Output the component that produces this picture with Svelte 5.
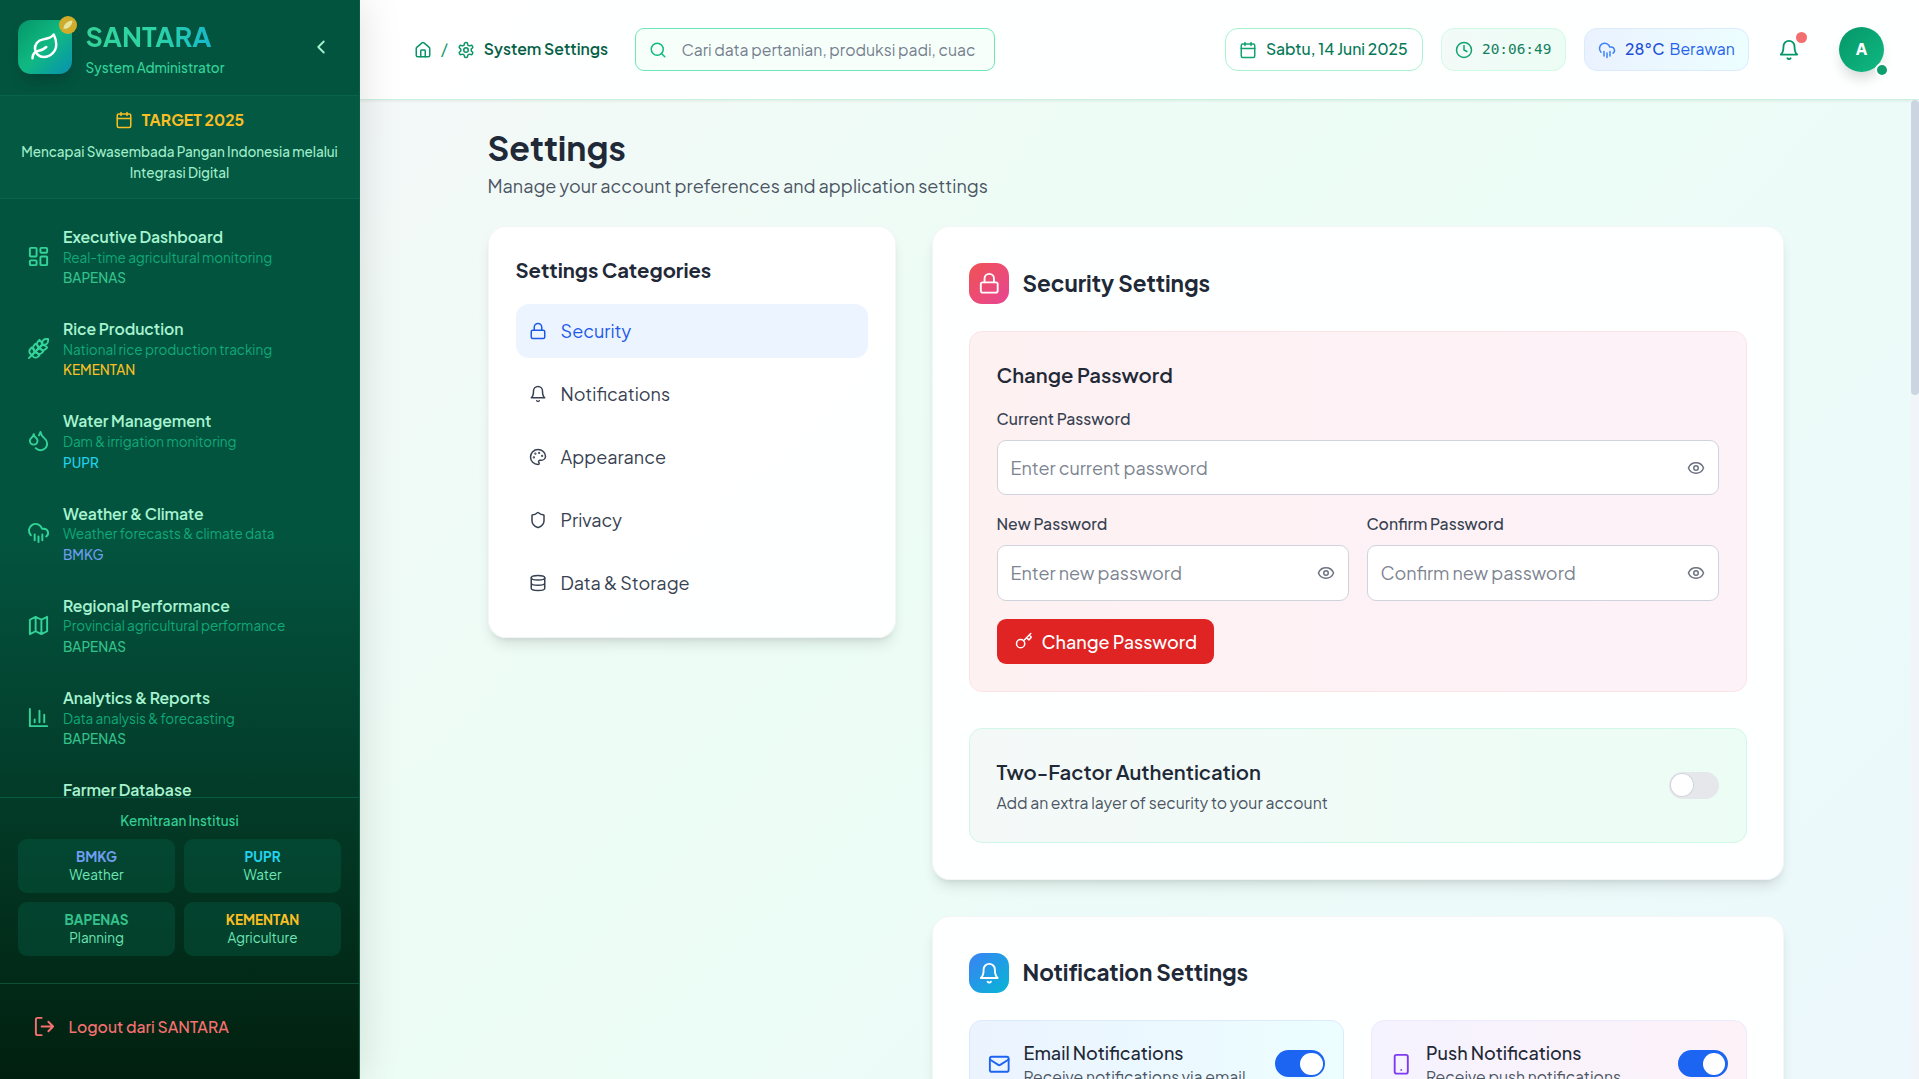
<script>
  const icons = {
    leaf: '<path d="M11 20A7 7 0 0 1 9.8 6.1C15.5 5 17 4.48 19 2c1 2 2 4.18 2 8 0 5.5-4.78 10-10 10Z"/><path d="M2 21c0-3 1.85-5.36 5.08-6C9.5 14.52 12 13 13 12"/>',
    chevron: '<path d="m15 18-6-6 6-6"/>',
    calendar: '<path d="M8 2v4M16 2v4M3 10h18"/><rect width="18" height="18" x="3" y="4" rx="2"/>',
    dashboard: '<rect width="7" height="9" x="3" y="3" rx="1"/><rect width="7" height="5" x="14" y="3" rx="1"/><rect width="7" height="9" x="14" y="12" rx="1"/><rect width="7" height="5" x="3" y="16" rx="1"/>',
    wheat: '<path d="M2 22 16 8"/><path d="M3.47 12.53 5 11l1.53 1.53a3.5 3.5 0 0 1 0 4.94L5 19l-1.53-1.53a3.5 3.5 0 0 1 0-4.94Z"/><path d="M7.47 8.53 9 7l1.53 1.53a3.5 3.5 0 0 1 0 4.94L9 15l-1.53-1.53a3.5 3.5 0 0 1 0-4.94Z"/><path d="M11.47 4.53 13 3l1.53 1.53a3.5 3.5 0 0 1 0 4.94L13 11l-1.53-1.53a3.5 3.5 0 0 1 0-4.94Z"/><path d="M20 2h2v2a4 4 0 0 1-4 4h-2V6a4 4 0 0 1 4-4Z"/><path d="M11.47 17.47 13 19l-1.53 1.53a3.5 3.5 0 0 1-4.94 0L5 19l1.53-1.53a3.5 3.5 0 0 1 4.94 0Z"/><path d="M15.47 13.47 17 15l-1.53 1.53a3.5 3.5 0 0 1-4.94 0L9 15l1.53-1.53a3.5 3.5 0 0 1 4.94 0Z"/><path d="M19.47 9.47 21 11l-1.53 1.53a3.5 3.5 0 0 1-4.94 0L13 11l1.53-1.53a3.5 3.5 0 0 1 4.94 0Z"/>',
    droplets: '<path d="M7 16.3c2.2 0 4-1.83 4-4.05 0-1.16-.57-2.26-1.71-3.19S7.29 6.75 7 5.3c-.29 1.45-1.14 2.84-2.29 3.76S3 11.1 3 12.25c0 2.22 1.8 4.05 4 4.05z"/><path d="M12.56 6.6A10.97 10.97 0 0 0 14 3.02c.5 2.5 2 4.9 4 6.5s3 3.5 3 5.5a6.98 6.98 0 0 1-11.91 4.97"/>',
    rain: '<path d="M4 14.899A7 7 0 1 1 15.71 8h1.79a4.5 4.5 0 0 1 2.5 8.242"/><path d="M16 14v6M8 14v6M12 16v6"/>',
    map: '<path d="m3 6 6-3 6 3 6-3v15l-6 3-6-3-6 3zM9 3v15M15 6v15"/>',
    chart: '<path d="M3 3v18h18M18 17V9M13 17V5M8 17v-3"/>',
    users: '<path d="M16 21v-2a4 4 0 0 0-4-4H6a4 4 0 0 0-4 4v2"/><circle cx="9" cy="7" r="4"/>',
    logout: '<path d="M9 21H5a2 2 0 0 1-2-2V5a2 2 0 0 1 2-2h4M16 17l5-5-5-5M21 12H9"/>',
    home: '<path d="M15 21v-8a1 1 0 0 0-1-1h-4a1 1 0 0 0-1 1v8"/><path d="M3 10a2 2 0 0 1 .709-1.528l7-5.999a2 2 0 0 1 2.582 0l7 5.999A2 2 0 0 1 21 10v9a2 2 0 0 1-2 2H5a2 2 0 0 1-2-2z"/>',
    settings: '<path d="M12.22 2h-.44a2 2 0 0 0-2 2v.18a2 2 0 0 1-1 1.73l-.43.25a2 2 0 0 1-2 0l-.15-.08a2 2 0 0 0-2.73.73l-.22.38a2 2 0 0 0 .73 2.73l.15.1a2 2 0 0 1 1 1.72v.51a2 2 0 0 1-1 1.74l-.15.09a2 2 0 0 0-.73 2.73l.22.38a2 2 0 0 0 2.73.73l.15-.08a2 2 0 0 1 2 0l.43.25a2 2 0 0 1 1 1.73V20a2 2 0 0 0 2 2h.44a2 2 0 0 0 2-2v-.18a2 2 0 0 1 1-1.73l.43-.25a2 2 0 0 1 2 0l.15.08a2 2 0 0 0 2.73-.73l.22-.39a2 2 0 0 0-.73-2.73l-.15-.08a2 2 0 0 1-1-1.74v-.5a2 2 0 0 1 1-1.74l.15-.09a2 2 0 0 0 .73-2.73l-.22-.38a2 2 0 0 0-2.73-.73l-.15.08a2 2 0 0 1-2 0l-.43-.25a2 2 0 0 1-1-1.73V4a2 2 0 0 0-2-2z"/><circle cx="12" cy="12" r="3"/>',
    search: '<circle cx="11" cy="11" r="8"/><path d="m21 21-4.3-4.3"/>',
    clock: '<circle cx="12" cy="12" r="10"/><path d="M12 6v6l4 2"/>',
    bell: '<path d="M6 8a6 6 0 0 1 12 0c0 7 3 9 3 9H3s3-2 3-9M10.3 21a1.94 1.94 0 0 0 3.4 0"/>',
    lock: '<rect width="18" height="11" x="3" y="11" rx="2"/><path d="M7 11V7a5 5 0 0 1 10 0v4"/>',
    palette: '<g fill="currentColor"><circle cx="13.5" cy="6.5" r=".5"/><circle cx="17.5" cy="10.5" r=".5"/><circle cx="8.5" cy="7.5" r=".5"/><circle cx="6.5" cy="12.5" r=".5"/></g><path d="M12 2C6.5 2 2 6.5 2 12s4.5 10 10 10c.926 0 1.648-.746 1.648-1.688 0-.437-.18-.835-.437-1.125-.29-.289-.438-.652-.438-1.125a1.64 1.64 0 0 1 1.668-1.668h1.996c3.051 0 5.555-2.503 5.555-5.554C21.965 6.012 17.461 2 12 2z"/>',
    shield: '<path d="M20 13c0 5-3.5 7.5-7.66 8.95a1 1 0 0 1-.67-.01C7.5 20.5 4 18 4 13V6a1 1 0 0 1 1-1c2 0 4.5-1.2 6.24-2.72a1.17 1.17 0 0 1 1.52 0C14.51 3.81 17 5 19 5a1 1 0 0 1 1 1z"/>',
    database: '<ellipse cx="12" cy="5" rx="9" ry="3"/><path d="M3 5v14a9 3 0 0 0 18 0V5M3 12a9 3 0 0 0 18 0"/>',
    eye: '<path d="M2.062 12.348a1 1 0 0 1 0-.696 10.75 10.75 0 0 1 19.876 0 1 1 0 0 1 0 .696 10.75 10.75 0 0 1-19.876 0"/><circle cx="12" cy="12" r="3"/>',
    key: '<path d="m15.5 7.5 2.3 2.3a1 1 0 0 0 1.4 0l2.1-2.1a1 1 0 0 0 0-1.4L19 4M21 2l-9.6 9.6"/><circle cx="7.5" cy="15.5" r="5.5"/>',
    mail: '<rect width="20" height="16" x="2" y="4" rx="2"/><path d="m22 7-8.97 5.7a1.94 1.94 0 0 1-2.06 0L2 7"/>',
    phone: '<rect width="14" height="20" x="5" y="2" rx="2"/><path d="M12 18h.01"/>'
  };

  const nav = [
    { icon: 'dashboard', title: 'Executive Dashboard', desc: 'Real-time agricultural monitoring', org: 'BAPENAS' },
    { icon: 'wheat', title: 'Rice Production', desc: 'National rice production tracking', org: 'KEMENTAN' },
    { icon: 'droplets', title: 'Water Management', desc: 'Dam & irrigation monitoring', org: 'PUPR' },
    { icon: 'rain', title: 'Weather & Climate', desc: 'Weather forecasts & climate data', org: 'BMKG' },
    { icon: 'map', title: 'Regional Performance', desc: 'Provincial agricultural performance', org: 'BAPENAS' },
    { icon: 'chart', title: 'Analytics & Reports', desc: 'Data analysis & forecasting', org: 'BAPENAS' },
    { icon: 'users', title: 'Farmer Database', desc: '', org: '' }
  ];
  const partners = [
    { org: 'BMKG', role: 'Weather' },
    { org: 'PUPR', role: 'Water' },
    { org: 'BAPENAS', role: 'Planning' },
    { org: 'KEMENTAN', role: 'Agriculture' }
  ];
  const categories = [
    { icon: 'lock', label: 'Security' },
    { icon: 'bell', label: 'Notifications' },
    { icon: 'palette', label: 'Appearance' },
    { icon: 'shield', label: 'Privacy' },
    { icon: 'database', label: 'Data & Storage' }
  ];
  let active = $state('Security');
  let twoFactor = $state(false);
  let email = $state(true);
  let push = $state(true);
</script>

{#snippet icon(name, cls = '')}
  <svg class="icon {cls}" viewBox="0 0 24 24" aria-hidden="true">{@html icons[name]}</svg>
{/snippet}

{#snippet password(label, hint)}
  <label class="field">
    <span class="label">{label}</span>
    <span class="control">
      <input type="password" placeholder={hint} />
      {@render icon('eye')}
    </span>
  </label>
{/snippet}

<div class="app">
  <aside class="sidebar">
    <div class="brand">
      <div class="logo">
        {@render icon('leaf')}
        <span class="badge"><svg viewBox="0 0 18 18"><path d="M4.5 13C4.500 8.500 8 5 13.500 4.500C13 10 9.500 13 4.500 13Z" /></svg></span>
      </div>
      <div class="brand-text">
        <div class="name">SANTARA</div>
        <div class="role">System Administrator</div>
      </div>
      <button class="collapse" aria-label="Collapse">{@render icon('chevron')}</button>
    </div>
    <div class="target">
      <div class="target-title">{@render icon('calendar')}<span>TARGET 2025</span></div>
      <p>Mencapai Swasembada Pangan Indonesia melalui<br />Integrasi Digital</p>
    </div>
    <nav>
      {#each nav as item}
        <a class="nav-item" href="#top">
          {@render icon(item.icon)}
          <span class="nav-text">
            <span class="nav-title">{item.title}</span>
            <span class="nav-desc">{item.desc}</span>
            <span class="nav-org {item.org.toLowerCase()}">{item.org}</span>
          </span>
        </a>
      {/each}
    </nav>
    <div class="partners">
      <div class="partners-title">Kemitraan Institusi</div>
      <div class="partner-grid">
        {#each partners as p}
          <div class="partner">
            <b class={p.org.toLowerCase()}>{p.org}</b>
            <span>{p.role}</span>
          </div>
        {/each}
      </div>
    </div>
    <div class="logout">{@render icon('logout')}<span>Logout dari SANTARA</span></div>
  </aside>

  <div class="content">
    <header>
      <div class="crumbs">
        {@render icon('home')}<span class="slash">/</span>{@render icon('settings')}<span class="crumb">System Settings</span>
      </div>
      <div class="search">
        {@render icon('search')}
        <input placeholder="Cari data pertanian, produksi padi, cuaca..." />
      </div>
      <div class="pill date">{@render icon('calendar')}<span>Sabtu, 14 Juni 2025</span></div>
      <div class="pill time">{@render icon('clock')}<span>20:06:49</span></div>
      <div class="pill weather">{@render icon('rain')}<span class="temp">28°C</span><span class="sky">Berawan</span></div>
      <div class="alerts">{@render icon('bell')}<i></i></div>
      <div class="avatar">A<i></i></div>
    </header>

    <main>
      <div class="page">
        <h1>Settings</h1>
        <p class="lead">Manage your account preferences and application settings</p>
        <div class="columns">
          <section class="card categories">
            <h3>Settings Categories</h3>
            <div class="category-list">
              {#each categories as c}
                <button class="category" class:active={active === c.label} onclick={() => (active = c.label)}>
                  {@render icon(c.icon)}<span>{c.label}</span>
                </button>
              {/each}
            </div>
          </section>

          <div class="stack">
            <section class="card">
              <div class="card-head">
                <span class="tile red">{@render icon('lock')}</span>
                <h2>Security Settings</h2>
              </div>
              <div class="panel rose">
                <h4>Change Password</h4>
                {@render password('Current Password', 'Enter current password')}
                <div class="pair">
                  {@render password('New Password', 'Enter new password')}
                  {@render password('Confirm Password', 'Confirm new password')}
                </div>
                <button class="primary">{@render icon('key')}<span>Change Password</span></button>
              </div>
              <div class="panel mint">
                <div>
                  <h4>Two-Factor Authentication</h4>
                  <p class="sub">Add an extra layer of security to your account</p>
                </div>
                <button class="switch" class:on={twoFactor} aria-label="Two-factor" onclick={() => (twoFactor = !twoFactor)}><i></i></button>
              </div>
            </section>

            <section class="card">
              <div class="card-head">
                <span class="tile blue">{@render icon('bell')}</span>
                <h2>Notification Settings</h2>
              </div>
              <div class="options">
                <div class="option sky-panel">
                  {@render icon('mail')}
                  <div class="option-text">
                    <strong>Email Notifications</strong>
                    <span>Receive notifications via email</span>
                  </div>
                  <button class="switch" class:on={email} aria-label="Email" onclick={() => (email = !email)}><i></i></button>
                </div>
                <div class="option violet-panel">
                  {@render icon('phone')}
                  <div class="option-text">
                    <strong>Push Notifications</strong>
                    <span>Receive push notifications</span>
                  </div>
                  <button class="switch" class:on={push} aria-label="Push" onclick={() => (push = !push)}><i></i></button>
                </div>
              </div>
            </section>
          </div>
        </div>
      </div>
      <div class="scroll"><i></i></div>
    </main>
  </div>
</div>

<style>
  :global(body) { margin: 0; overflow: hidden; }
  * { box-sizing: border-box; }
  h1, h2, h3, h4, p { margin: 0; }
  button, input { font: inherit; letter-spacing: inherit; border: 0; padding: 0; background: none; color: inherit; }
  .icon {
    width: 18px; height: 18px; flex: none; display: block;
    fill: none; stroke: currentColor; stroke-width: 2; stroke-linecap: round; stroke-linejoin: round;
  }
  .app {
    display: flex; width: 100vw; height: 100vh; overflow: hidden;
    font-family: "Plus Jakarta Sans", Inter, "Open Sans", sans-serif; font-size: 18px; line-height: 27px; color: #1f2937;
  }

  .sidebar {
    position: relative; z-index: 2;
    width: 360px; flex: none; display: flex; flex-direction: column;
    border-right: 1px solid #075f46;
    background: linear-gradient(180deg, #03543f 0%, #03543f 50%, #02200f 100%);
    box-shadow: 0 0 40px rgba(0, 0, 0, 0.13);
  }
  .brand { height: 96px; display: flex; align-items: center; padding: 0 27px 1px 18px; border-bottom: 1px solid #07634a; flex: none; }
  .logo {
    position: relative; width: 54px; height: 54px; border-radius: 13px; color: #fff;
    display: grid; place-items: center;
    background: linear-gradient(135deg, #059669, #10b981 50%, #0891b2);
    box-shadow: 0 9px 14px -3px rgba(0, 0, 0, 0.18);
  }
  .logo .icon { width: 30px; height: 30px; }
  .badge { position: absolute; right: -5px; top: -4px; width: 18px; height: 18px; border-radius: 50%; background: #d1ac2b; }
  .badge svg { display: block; width: 18px; height: 18px; fill: #e2e6a0; }
  .brand-text { flex: 1; padding: 1.5px 0 0 13.5px; }
  .name {
    width: max-content; font-size: 27px; line-height: 36px; font-weight: 700;
    background: linear-gradient(90deg, #34d399, #2dd4a5 55%, #16b8cc); background-clip: text; color: transparent;
  }
  .role { margin-top: 5px; font-size: 13.5px; line-height: 18px; font-weight: 500; color: #34d399; }
  .collapse { color: #a7f3d0; }
  .collapse .icon { width: 22px; height: 22px; }
  .target { height: 103px; flex: none; padding: 10px 0 0; text-align: center; background: rgba(16, 150, 105, 0.07); border-bottom: 1px solid #07634a; }
  .target-title { display: flex; justify-content: center; align-items: center; gap: 9px; font-size: 15.75px; line-height: 27px; font-weight: 700; color: #fbbf24; }
  .target p { margin-top: 8px; font-size: 13.5px; line-height: 21px; font-weight: 500; letter-spacing: -0.045px; color: #a0edca; }

  nav { flex: 1 1 0; min-height: 0; overflow: hidden; padding: 16px 13px 0; display: flex; flex-direction: column; gap: 7.6px; }
  .nav-item { flex: none; display: flex; align-items: center; gap: 13px; padding: 12px 14px; color: #34d399; text-decoration: none; }
  .nav-item .icon { width: 23px; height: 23px; margin-top: -2px; }
  .nav-text { display: flex; flex-direction: column; line-height: 20.2px; font-size: 13.5px; white-space: nowrap; }
  .nav-text > span { min-height: 20.2px; }
  .nav-title { font-size: 15.75px; font-weight: 600; letter-spacing: -0.07px; color: #a7f3d0; }
  .nav-desc { color: #10aa78; position: relative; top: 0.4px; }
  .nav-org { font-weight: 500; position: relative; top: 0.7px; }
  .bapenas { color: #34c38d; }
  .kementan { color: #fbbf24; }
  .pupr { color: #22d3ee; }
  .bmkg { color: #6f9df0; }

  .partners { height: 186px; flex: none; border-top: 1px solid #075a42; padding: 12px 18px 0; }
  .partners-title { text-align: center; font-size: 13.5px; line-height: 22px; font-weight: 500; color: #34d399; }
  .partner-grid { display: grid; grid-template-columns: 1fr 1fr; gap: 9px; margin-top: 7px; }
  .partner { height: 54px; border-radius: 9px; background: rgba(6, 95, 70, 0.4); display: flex; flex-direction: column; align-items: center; justify-content: center; font-size: 13.5px; line-height: 18px; color: #6ee7b7; }
  .logout { flex: 0 0 96px; border-top: 1px solid #0b5138; display: flex; align-items: center; gap: 12.5px; padding: 0 0 10px 33px; font-size: 15.75px; font-weight: 500; color: #f87171; }
  .logout .icon { width: 23px; height: 23px; }

  .content { flex: 1; min-width: 0; display: flex; flex-direction: column; background: linear-gradient(135deg, #f4f8f8 0%, #ecfdf5 42%, #ecf8fc 100%); }
  header {
    height: 100px; flex: none; display: flex; align-items: center; padding: 0 35px 0 54px;
    background: rgba(255, 255, 255, 0.93); border-bottom: 1px solid #cdf1df; box-shadow: 0 1px 3px rgba(0, 0, 0, 0.07);
    font-size: 15.75px; line-height: 22.5px;
  }
  .crumbs { display: flex; align-items: center; gap: 9px; width: 221px; color: #0a9468; flex: none; }
  .crumb { font-weight: 600; color: #065f46; white-space: nowrap; }
  .search { width: 360px; height: 42.5px; display: flex; align-items: center; gap: 14.5px; padding: 0 18.5px 0 13px; border: 1px solid #6ee7b7; border-radius: 9px; background: #f7fffb; color: #10b981; flex: none; }
  .search input { flex: 1; min-width: 0; height: 22.5px; outline: 0; }
  .search input::placeholder { color: #757f8e; opacity: 1; }
  .pill { height: 42.5px; display: flex; align-items: center; gap: 9px; padding: 0 13px; border: 1px solid #d1fae5; border-radius: 13px; white-space: nowrap; flex: none; }
  .date { width: 198px; margin-left: auto; background: #fff; border-color: #a7f3d0; color: #047857; font-weight: 500; }
  .date .icon, .time .icon { color: #10a371; }
  .time { width: 125px; margin-left: 18px; background: linear-gradient(90deg, #f3faf8, #ecfdf5); color: #12805f; }
  .time span { font-family: "DejaVu Sans Mono", monospace; font-size: 14.4px; }
  .weather { width: 165px; margin-left: 18px; background: linear-gradient(90deg, #eaf2ff, #ecfeff); border-color: #dbeafe; color: #3b82f6; }
  .temp { color: #1d4ed8; font-weight: 500; }
  .sky { color: #2563eb; margin-left: -4px; }
  .alerts { position: relative; margin-left: 29px; color: #059669; }
  .alerts .icon { width: 22px; height: 22px; }
  .alerts i { position: absolute; right: -7px; top: -7px; width: 11px; height: 11px; border-radius: 50%; background: #f36f6f; }
  .avatar { position: relative; margin-left: 39px; width: 45px; height: 45px; border-radius: 50%; display: grid; place-items: center; color: #fff; font-weight: 800; background: linear-gradient(135deg, #059669, #10b981); box-shadow: 0 9px 14px -3px rgba(0, 0, 0, 0.17); }
  .avatar i { position: absolute; right: -5px; bottom: -5px; width: 14px; height: 14px; border-radius: 50%; border: 2px solid #fff; background: #0f9f6e; }

  main { flex: 1; min-height: 0; display: flex; overflow: hidden; }
  .page { width: 1296px; flex: none; margin: 0 auto; padding: 25px 0 0; }
  .page { margin-left: 127.5px; }
  .scroll { width: 8px; flex: none; background: #f1f5f9; }
  .scroll i { display: block; height: 295px; border-radius: 4px; background: #cbd5e1; }
  h1 { font-size: 33.75px; line-height: 45px; font-weight: 700; width: max-content; }
  .lead { line-height: 27px; margin-top: 2px; color: #4b5563; width: max-content; }
  .columns { display: grid; grid-template-columns: 408px 852px; gap: 36px; align-items: start; margin-top: 27.2px; }
  .stack { display: flex; flex-direction: column; gap: 36px; }
  .card { border: 1px solid rgba(243, 244, 246, 0.9); border-radius: 18px; background: rgba(255, 255, 255, 0.95); padding: 36px; box-shadow: 0 9px 14px -3px rgba(0, 0, 0, 0.11), 0 4px 6px -4px rgba(0, 0, 0, 0.11); }
  .categories { padding: 27px; }
  h3 { font-size: 20.25px; line-height: 31.5px; font-weight: 700; letter-spacing: -0.02px; }
  .category-list { display: flex; flex-direction: column; gap: 9px; margin-top: 18px; }
  .category { height: 54px; display: flex; align-items: center; gap: 13.5px; padding: 0 13.5px; border-radius: 13px; color: #374151; }
  .active { background: #ebf4ff; color: #1d5ae8; }

  .card-head { display: flex; align-items: center; gap: 13.5px; margin-bottom: 27px; }
  .tile { width: 40.5px; height: 40.5px; border-radius: 13px; display: grid; place-items: center; color: #fff; }
  .tile .icon { width: 22.5px; height: 22.5px; }
  .red { background: linear-gradient(135deg, #f05252, #e74694); }
  .blue { background: linear-gradient(135deg, #3b82f6, #06b6d4); }
  h2 { font-size: 22.5px; line-height: 31.5px; font-weight: 700; letter-spacing: -0.03px; }
  .panel { border: 1px solid; border-radius: 13px; padding: 27px; }
  .rose { height: 361px; border-color: #fde3e5; background: linear-gradient(90deg, #fdf1f2, #fdf2f8); }
  h4 { font-size: 20.25px; line-height: 31.5px; font-weight: 600; }
  .field { display: block; }
  .rose h4 { margin-bottom: 18px; }
  .field .label { display: block; font-size: 15.75px; line-height: 22.5px; font-weight: 500; color: #374151; margin-bottom: 9px; }
  .control { display: flex; align-items: center; height: 55.75px; padding: 0 13px; border: 1px solid #cfd4dc; border-radius: 9px; background: #fff; color: #6b7280; }
  .control input { flex: 1; min-width: 0; outline: 0; }
  .control input::placeholder { color: #7c8491; opacity: 1; }
  .pair { display: grid; grid-template-columns: 1fr 1fr; gap: 18px; margin-top: 18px; }
  .primary { margin-top: 18px; width: 217px; height: 45px; display: flex; align-items: center; gap: 9px; padding: 0 18px; border-radius: 9px; background: #e02424; color: #fff; font-weight: 500; white-space: nowrap; }
  .mint { height: 115px; margin-top: 36px; display: flex; align-items: center; justify-content: space-between; border-color: #d1f7e6; background: linear-gradient(90deg, #f4f9f8, #ecfdf5); }
  .sub { font-size: 15.75px; line-height: 22.5px; margin-top: 4.5px; color: #4b5563; }
  .switch { width: 50px; height: 27px; border-radius: 14px; padding: 2px; background: #e5e7eb; flex: none; }
  .switch i { display: block; width: 22.5px; height: 22.5px; border-radius: 50%; background: #fff; box-shadow: 0 0 0 1px #d1d5db; }
  .on { background: #1c64f2; }
  .on i { margin-left: 23px; box-shadow: none; }
  .options { display: grid; grid-template-columns: 1fr 1fr; gap: 27px; }
  .option { height: 87.5px; display: flex; align-items: center; padding: 0 18px; border: 1px solid; border-radius: 13px; }
  .option > .icon { width: 22.5px; height: 22.5px; }
  .option-text { flex: 1; display: flex; flex-direction: column; padding-left: 13.5px; }
  .option-text strong { font-weight: 500; }
  .option-text span { font-size: 15.75px; line-height: 22.5px; color: #4b5563; }
  .sky-panel { border-color: #dbeafe; background: linear-gradient(90deg, #ebf3ff, #ecfeff); color: #1c64f2; }
  .violet-panel { border-color: #ede9fe; background: linear-gradient(90deg, #f5f3ff, #fdf2f8); color: #7e3af2; }
  .option strong { color: #1f2937; }
</style>
